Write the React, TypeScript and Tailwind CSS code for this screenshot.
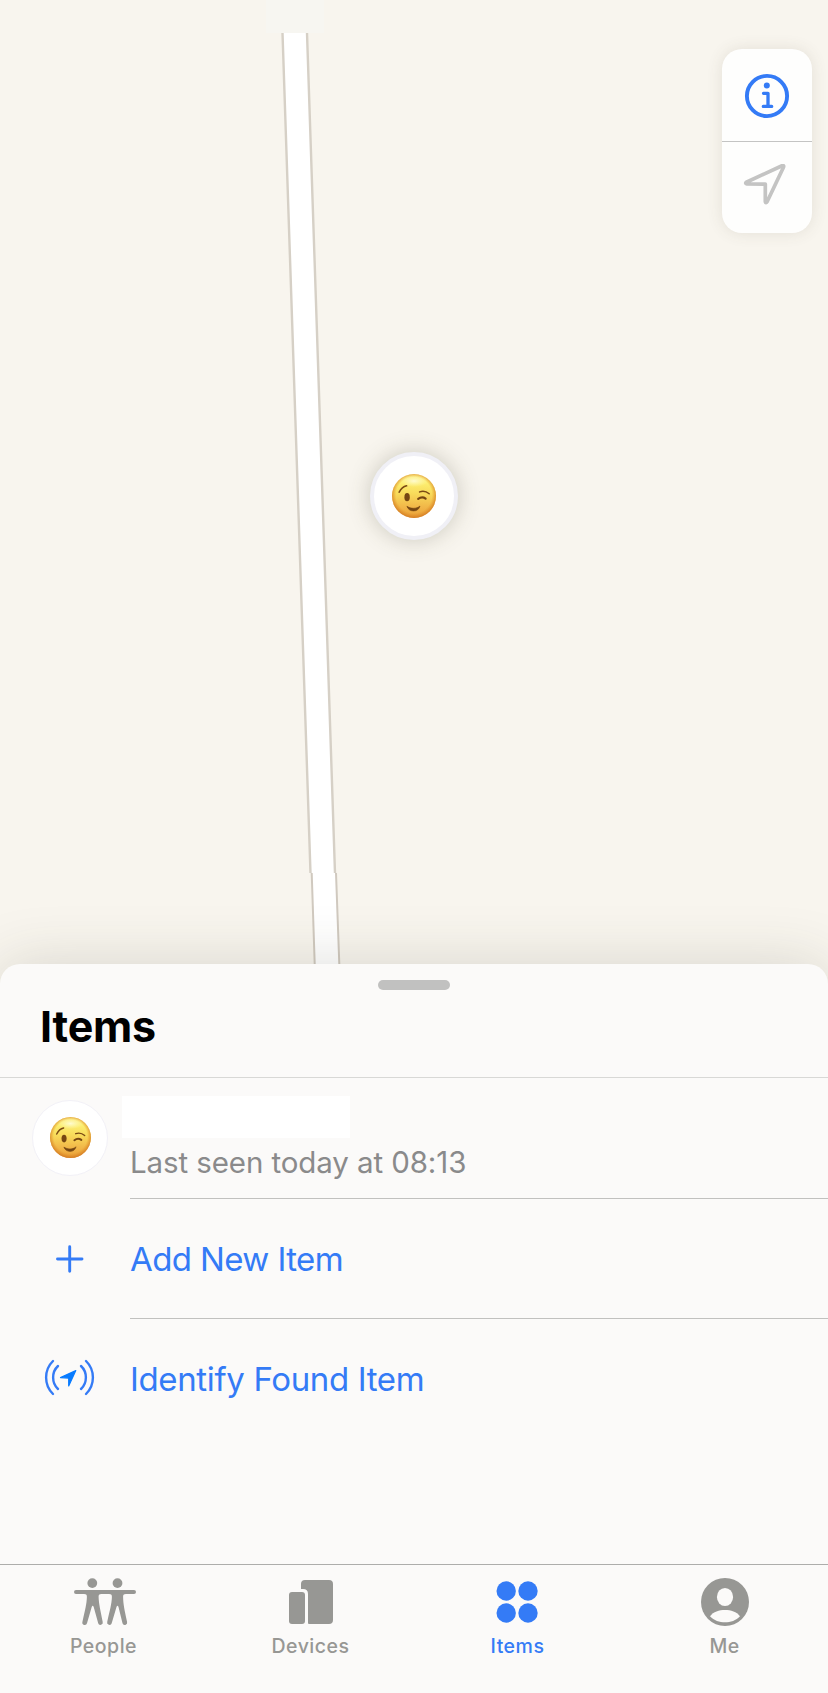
import React from "react";

function WinkFace({ className }: { className: string }) {
  return (
    <svg viewBox="0 0 44 44" className={className} aria-hidden="true">
      <defs>
        <linearGradient id="face" x1="0" y1="0" x2="0" y2="1">
          <stop offset="0" stopColor="#fdee84" />
          <stop offset="0.2" stopColor="#fcee70" />
          <stop offset="0.45" stopColor="#f8da5a" />
          <stop offset="0.72" stopColor="#f2ba4a" />
          <stop offset="1" stopColor="#ea9f3a" />
        </linearGradient>
        <radialGradient id="rim" cx="0.5" cy="0.48" r="0.52">
          <stop offset="0.78" stopColor="#e08a1e" stopOpacity="0" />
          <stop offset="1" stopColor="#cf7622" stopOpacity="0.85" />
        </radialGradient>
        <radialGradient id="gloss" cx="0.5" cy="0.5" r="0.5">
          <stop offset="0" stopColor="#fffde0" stopOpacity="0.85" />
          <stop offset="1" stopColor="#fffbc0" stopOpacity="0" />
        </radialGradient>
      </defs>
      <circle cx="22" cy="22" r="22" fill="url(#face)" />
      <circle cx="22" cy="22" r="22" fill="url(#rim)" />
      <ellipse cx="22" cy="7" rx="14" ry="6" fill="url(#gloss)" />
      <path d="M7.2 18.2C9 14.6 11.4 12.5 14.6 11.8" fill="none" stroke="#7a4a14" strokeWidth="1.600" strokeLinecap="round" />
      <path d="M27.6 17.900C31 16.700 34.400 17.400 37.200 19.800" fill="none" stroke="#7a4a14" strokeWidth="1.500" strokeLinecap="round" />
      <ellipse cx="15.100" cy="23.200" rx="2.700" ry="4.100" fill="#754612" />
      <path d="M26.200 24.900C28.500 23.200 31.600 23.200 33.600 24.600" fill="none" stroke="#754612" strokeWidth="2.200" strokeLinecap="round" />
      <path d="M14.900 32.300C19 35 24.400 35 28 32C27 35.400 24.800 36.900 21.600 36.900C18.400 36.900 16 35.400 14.900 32.300Z" fill="#754612" stroke="#754612" strokeWidth="0.600" strokeLinejoin="round" />
    </svg>
  );
}

function MapView() {
  return (
    <div className="relative h-[964px] w-full shrink-0 bg-[#f8f5ee]">
      <svg viewBox="0 0 828 964" className="block h-[964px] w-[828px]" aria-hidden="true">
        <rect x="266" y="0" width="58" height="33" fill="#f7f6f1" />
        <path d="M282.500 33H307L335 873H336L339.300 964H314.700L311.700 873H310.500Z" fill="#ffffff" />
        <path d="M282.500 33L310.500 873M307 33L335 873" stroke="#d6d0c6" strokeWidth="2.400" fill="none" />
        <path d="M311.700 873L314.700 964M336 873L339.300 964" stroke="#d0c9bf" strokeWidth="2" fill="none" />
      </svg>

      <div className="absolute left-[370px] top-[452px] flex size-[88px] items-center justify-center rounded-full border-4 border-[#f0f0f6] bg-white shadow-[0_0_22px_rgba(80,76,55,0.26)]">
        <WinkFace className="size-11" />
      </div>

      <div className="absolute left-[722px] top-[49px] flex h-[184px] w-[90px] flex-col rounded-[20px] bg-[#fefefd] shadow-[0_0_16px_rgba(80,76,55,0.12)]">
        <button className="flex h-[93px] items-center justify-center border-b border-[#c4c4c3]" aria-label="Info">
          <svg viewBox="743 71 48 48" className="size-12" aria-hidden="true">
            <circle cx="767" cy="96" r="20.100" fill="none" stroke="#347bf6" strokeWidth="3.900" />
            <circle cx="766.800" cy="85.600" r="3" fill="#347bf6" />
            <path d="M763.500 93.300H768V106.300M763.300 106.400H771.700" fill="none" stroke="#347bf6" strokeWidth="3.300" strokeLinecap="round" strokeLinejoin="round" />
          </svg>
        </button>
        <button className="flex flex-1 items-center justify-center" aria-label="My location">
          <svg viewBox="743 164 48 48" className="size-12" aria-hidden="true">
            <path d="M746.300 182.200L782 165.700Q784.300 165 783.500 167.200L767.100 201.800Q765.900 203.600 765.300 201.600V184.100L746.600 183.800Q745 183.100 746.300 182.200Z" fill="none" stroke="#c4c4c3" strokeWidth="3.700" strokeLinejoin="round" />
          </svg>
        </button>
      </div>
    </div>
  );
}

const tabs = [
  {
    label: "People",
    active: false,
    box: "74 1576 60 52",
    icon: (
      <g fill="currentColor">
        <circle cx="92.300" cy="1583.100" r="4.900" />
        <circle cx="117.500" cy="1583.100" r="4.900" />
        <path d="M76 1590H134A2 2 0 0 1 134 1594H126C123.500 1594 123 1595 123.100 1597C123.200 1604 124.500 1610 127.100 1622A2.300 2.300 0 0 1 122.500 1623.200L118.500 1607Q117.500 1604.500 116.500 1607L111.700 1623.200A2.300 2.300 0 0 1 107.200 1622C109.800 1610 111.700 1604 111.900 1597C112 1595 111.500 1594 109 1594H101.500C99 1594 98.500 1595 98.600 1597C98.800 1604 100.500 1610 102.700 1622A2.300 2.300 0 0 1 98.200 1623.200L93.700 1607Q92.700 1604.500 91.700 1607L87 1623.200A2.300 2.300 0 0 1 82.400 1622C85 1610 86.700 1604 86.900 1597C87 1595 86.500 1594 84 1594H76A2 2 0 0 1 76 1590Z" />
      </g>
    ),
  },
  {
    label: "Devices",
    active: false,
    box: "281 1576 60 52",
    icon: (
      <g fill="currentColor">
        <rect x="289" y="1592" width="16" height="32" rx="3" />
        <path d="M301 1589V1584Q301 1580 305 1580H329Q333 1580 333 1584V1620Q333 1624 329 1624H309Q308 1624 308 1623V1594Q308 1589 303 1589Z" />
      </g>
    ),
  },
  {
    label: "Items",
    active: true,
    box: "488 1576 60 52",
    icon: (
      <g fill="currentColor">
        <circle cx="506.200" cy="1591" r="9.700" />
        <circle cx="528" cy="1591" r="9.700" />
        <circle cx="506.200" cy="1613" r="9.700" />
        <circle cx="528" cy="1613" r="9.700" />
      </g>
    ),
  },
  {
    label: "Me",
    active: false,
    box: "695 1576 60 52",
    icon: (
      <g>
        <circle cx="725" cy="1602" r="24" fill="currentColor" />
        <ellipse cx="725" cy="1597" rx="8.100" ry="9.100" fill="#fbfaf9" />
        <path d="M710 1616.200C713.500 1611.800 719 1610 725 1610S736.500 1611.800 740 1616.200C736 1620.500 730.500 1622.300 725 1622.300S714 1620.500 710 1616.200Z" fill="#fbfaf9" />
      </g>
    ),
  },
];

function TabBar() {
  return (
    <nav className="grid h-[129px] grid-cols-4 border-t border-[#adadab]">
      {tabs.map((tab) => (
        <div
          key={tab.label}
          className={
            tab.active
              ? "flex flex-col items-center pt-[11px] text-[#347bf6]"
              : "flex flex-col items-center pt-[11px] text-[#979794]"
          }
        >
          <svg viewBox={tab.box} className="h-[52px] w-[60px] overflow-visible" aria-hidden="true">
            {tab.icon}
          </svg>
          <span className="mt-1.5 text-[19.5px] font-medium leading-6 tracking-[0.5px]">{tab.label}</span>
        </div>
      ))}
    </nav>
  );
}

export default function App() {
  return (
    <div className="flex h-[1693px] w-[828px] flex-col overflow-hidden bg-[#f8f5ee] font-['Inter',sans-serif]">
      <MapView />
      <section className="relative flex flex-1 flex-col rounded-t-[20px] bg-[#fbfaf9] shadow-[0_0_60px_rgba(60,60,40,0.17)]">
        <header className="flex h-[114px] flex-col border-b border-[#d8d8d6]">
          <div className="mt-4 h-2.5 w-[72px] self-center rounded-full bg-[#c1c1c0]" />
          <h1 className="ml-10 mt-2.5 text-[43px] font-bold leading-[52px] tracking-[-0.2px] text-black">Items</h1>
        </header>

        <ul className="flex flex-1 flex-col">
          <li className="flex h-[121px]">
            <div className="ml-8 mt-[22px] flex size-[76px] shrink-0 items-center justify-center rounded-full border border-[#f2f1f7] bg-white">
              <WinkFace className="mb-px size-[41px]" />
            </div>
            <div className="ml-[22px] flex flex-1 flex-col border-b border-[#c1c1bf]">
              <div className="-ml-2 mt-[18px] h-[42px] w-[228px] bg-white" />
              <p className="mt-1.5 text-[29.5px] leading-9 tracking-[-0.1px] text-[#8a8a8b]">Last seen today at 08:13</p>
            </div>
          </li>
          <li className="flex h-[120px]">
            <div className="flex w-[130px] shrink-0 items-center pl-[55px]">
              <svg viewBox="0 0 30 30" className="size-[30px]" aria-hidden="true">
                <path d="M14.700 2.800V27.200M2.500 15H27" stroke="#347bf6" strokeWidth="2.900" strokeLinecap="round" />
              </svg>
            </div>
            <div className="flex flex-1 items-center border-b border-[#c1c1bf] text-[33px] leading-10 tracking-[-0.6px] text-[#347bf6]">
              <span>Add New Item</span>
            </div>
          </li>
          <li className="flex h-[120px] items-center">
            <div className="flex w-[130px] shrink-0 pl-[42px]">
              <svg viewBox="42 1356 56 46" className="h-[46px] w-14 overflow-visible" aria-hidden="true">
                <g fill="none" stroke="#347bf6" strokeWidth="2.400" strokeLinecap="round">
                  <path d="M53 1361C43.800 1370 43.800 1385 53 1394" />
                  <path d="M58 1366C51.500 1372 51.500 1383 58 1389" />
                  <path d="M81 1366C87.500 1372 87.500 1383 81 1389" />
                  <path d="M86 1361C95.200 1370 95.200 1385 86 1394" />
                </g>
                <path d="M60.500 1377.600L75.800 1370.500L68.700 1385.900V1378.100Z" fill="#087bff" stroke="#087bff" strokeWidth="1.200" strokeLinejoin="round" />
              </svg>
            </div>
            <span className="text-[33px] leading-10 tracking-[-0.36px] text-[#347bf6]">Identify Found Item</span>
          </li>
        </ul>

        <TabBar />
      </section>
    </div>
  );
}
